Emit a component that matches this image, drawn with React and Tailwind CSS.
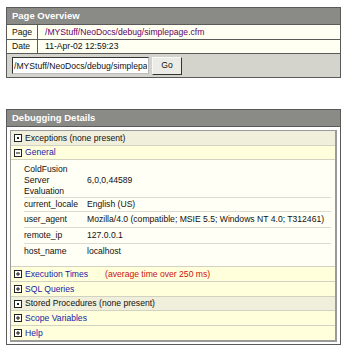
import React from "react";

function Icon({ kind }) {
  return (
    <span className="inline-flex items-center justify-center w-[8px] h-[8px] border border-[#222] bg-white mr-[3px] shrink-0">
      <svg width="6" height="6" viewBox="0 0 6 6">
        {kind === "dot" && <rect x="2" y="2" width="2" height="2" fill="#222" />}
        {(kind === "minus" || kind === "plus") && <rect x="1" y="2.5" width="4" height="1" fill="#111" />}
        {kind === "plus" && <rect x="2.5" y="1" width="1" height="4" fill="#111" />}
      </svg>
    </span>
  );
}

function SectionRow({ kind, label, link, bg, h, last, extra }) {
  return (
    <div className={`${h} ${bg} ${last ? "" : "border-b border-[#d2d2c2]"} flex items-center pl-[3px]`}>
      <Icon kind={kind} />
      <span className={link ? "text-[#1a1aa6]" : "text-[#111]"}>{label}</span>
      {extra}
    </div>
  );
}

export default function App() {
  return (
    <div className="w-[347px] h-[351px] bg-white pt-[7px] px-[6px] font-['Liberation_Sans',Arial,sans-serif] text-[8.6px] leading-none text-[#111]">
      {/* Page Overview */}
      <div className="w-[335px] border border-[#5a5a5a]">
        <div className="h-[17px] bg-[#8a8a86] text-white font-bold text-[9.5px] pl-[5px] flex items-center border-b border-[#5a5a5a]">
          Page Overview
        </div>
        <div className="flex h-[15px] bg-[#fffff2] border-b border-[#5a5a5a]">
          <div className="w-[31px] border-r border-[#5a5a5a] pl-[5px] flex items-center">Page</div>
          <div className="pl-[7px] flex items-center text-[#660066]">/MYStuff/NeoDocs/debug/simplepage.cfm</div>
        </div>
        <div className="flex h-[14px] bg-[#fffff2] border-b border-[#5a5a5a]">
          <div className="w-[31px] border-r border-[#5a5a5a] pl-[5px] flex items-center">Date</div>
          <div className="pl-[7px] flex items-center">11-Apr-02 12:59:23</div>
        </div>
        <div className="h-[23px] bg-[#d4d4cc] flex items-center pl-[5px] gap-[3px]">
          <input
            readOnly
            value="/MYStuff/NeoDocs/debug/simplepage.cfm"
            className="w-[137px] h-[17px] bg-white border border-t-[#333] border-l-[#333] border-r-[#bbb] border-b-[#bbb] px-[1px] text-[8.6px] text-[#111] outline-none"
          />
          <div className="w-[30px] h-[18px] bg-[#ecece6] border border-t-[#f8f8f8] border-l-[#f8f8f8] border-r-[#333] border-b-[#333] flex items-center justify-center">
            Go
          </div>
        </div>
      </div>

      {/* Debugging Details */}
      <div className="w-[335px] mt-[31px] border border-[#5a5a5a]">
        <div className="h-[17px] bg-[#8a8a86] text-white font-bold text-[9.5px] pl-[5px] flex items-center border-b border-[#5a5a5a]">
          Debugging Details
        </div>
        <div className="bg-white pt-[3px] px-[3px] pb-[2px]">
          <div className="border border-[#9a9a9a] border-r-2 border-b-2 bg-[#fffff0]">
            <SectionRow kind="dot" label="Exceptions (none present)" bg="bg-[#efefdc]" h="h-[15px]" />
            <SectionRow kind="minus" label="General" link bg="bg-[#ffffdc]" h="h-[14px]" />
            <div className="h-[107px] bg-[#fffff6] border-b border-[#d2d2c2] pl-[13px] pr-[4px]">
              <div className="flex border-b border-[#dcdcd4] pt-[4px] h-[38px]">
                <div className="w-[63px] leading-[11px]">ColdFusion<br />Server<br />Evaluation</div>
                <div className="leading-[11px] pt-[11px]">6,0,0,44589</div>
              </div>
              <div className="flex items-center border-b border-[#dcdcd4] h-[14px]">
                <div className="w-[63px]">current_locale</div>
                <div>English (US)</div>
              </div>
              <div className="flex items-center border-b border-[#dcdcd4] h-[16px]">
                <div className="w-[63px]">user_agent</div>
                <div className="whitespace-nowrap">Mozilla/4.0 (compatible; MSIE 5.5; Windows NT 4.0; T312461)</div>
              </div>
              <div className="flex items-center border-b border-[#dcdcd4] h-[16px]">
                <div className="w-[63px]">remote_ip</div>
                <div>127.0.0.1</div>
              </div>
              <div className="flex items-center h-[15px]">
                <div className="w-[63px]">host_name</div>
                <div>localhost</div>
              </div>
            </div>
            <SectionRow
              kind="plus"
              label="Execution Times"
              link
              bg="bg-[#ffffdc]"
              h="h-[15px]"
              extra={<span className="ml-[17px] text-[#cc1111]">(average time over 250 ms)</span>}
            />
            <SectionRow kind="plus" label="SQL Queries" link bg="bg-[#ffffdc]" h="h-[15px]" />
            <SectionRow kind="dot" label="Stored Procedures (none present)" bg="bg-[#efefdc]" h="h-[14px]" />
            <SectionRow kind="plus" label="Scope Variables" link bg="bg-[#ffffdc]" h="h-[15px]" />
            <SectionRow kind="plus" label="Help" link bg="bg-[#ffffdc]" h="h-[14px]" last />
          </div>
        </div>
      </div>
    </div>
  );
}
